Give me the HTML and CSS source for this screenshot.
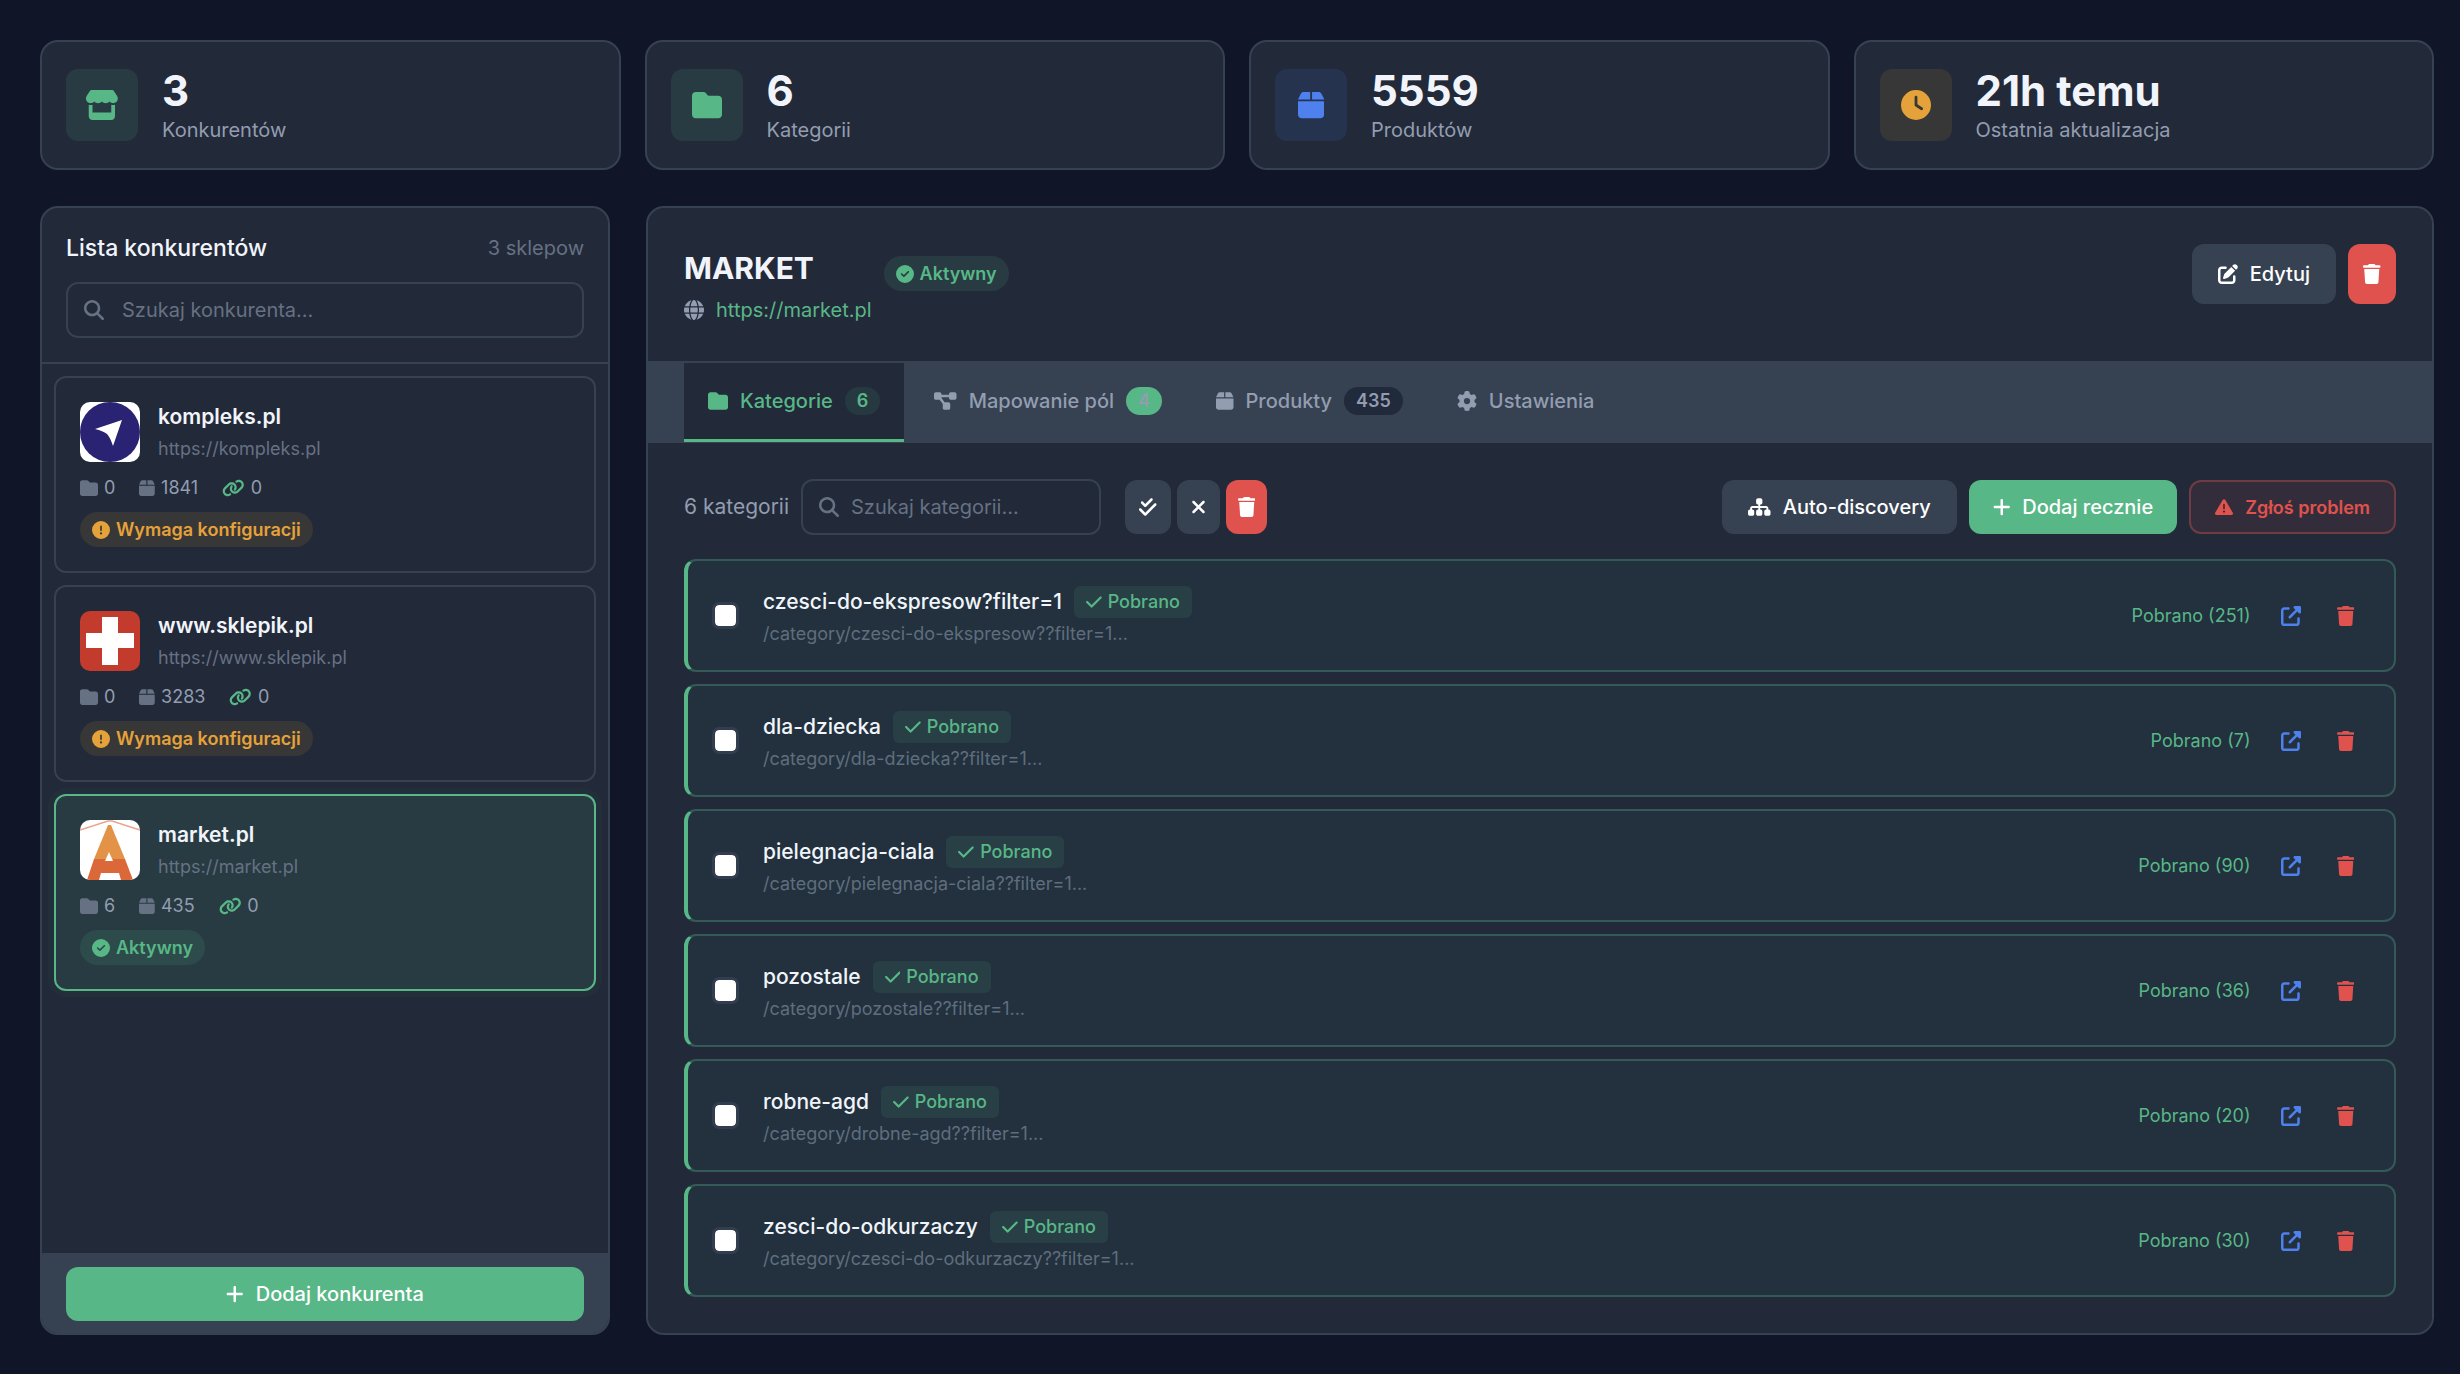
FILE: index.html
```
<!DOCTYPE html>
<html lang="pl">
<head>
  <meta charset="UTF-8">
  <meta name="viewport" content="width=device-width, initial-scale=1.0">
  <title>Konkurenci</title>
  <link rel="stylesheet" href="styles.css">
</head>
<body>
  <!-- Ikony -->
  <svg class="sprite" aria-hidden="true">
    <defs>
      <path id="i-store" d="M547.6 103.8L490.3 13.1C485.2 5 476.1 0 466.4 0H109.6C99.9 0 90.8 5 85.7 13.1L28.3 103.8c-29.6 46.8-3.4 111.9 51.9 119.4c4 .5 8.1 .8 12.1 .8c26.1 0 49.3-11.4 65.2-29c15.9 17.6 39.1 29 65.2 29c26.1 0 49.3-11.4 65.2-29c15.9 17.6 39.1 29 65.2 29c26.2 0 49.3-11.4 65.2-29c16 17.6 39.1 29 65.2 29c4.1 0 8.1-.3 12.1-.8c55.5-7.4 81.8-72.5 52.1-119.4zM499.7 254.9l-.1 0c-5.3 .7-10.7 1.1-16.2 1.1c-12.4 0-24.3-1.9-35.4-5.3V384H128V250.6c-11.2 3.5-23.2 5.4-35.6 5.4c-5.5 0-11-.4-16.3-1.1l-.1 0c-4.1-.6-8.1-1.3-12-2.3V384v64c0 35.3 28.7 64 64 64H448c35.3 0 64-28.7 64-64V384 252.6c-4 1-8 1.8-12.3 2.3z"/>
      <path id="i-folder" d="M64 480H448c35.3 0 64-28.7 64-64V160c0-35.3-28.7-64-64-64H288c-10.1 0-19.6-4.7-25.6-12.8L243.2 57.6C231.1 41.5 212.1 32 192 32H64C28.7 32 0 60.7 0 96V416c0 35.3 28.7 64 64 64z"/>
      <path id="i-box" d="M50.7 58.5L0 160H208V32H93.7C75.5 32 58.9 42.3 50.7 58.5zM240 160H448L397.3 58.5C389.1 42.3 372.5 32 354.3 32H240V160zm208 32H0V416c0 35.3 28.7 64 64 64H384c35.3 0 64-28.7 64-64V192z"/>
      <path id="i-clock" d="M256 0a256 256 0 1 1 0 512A256 256 0 1 1 256 0zM232 120V256c0 8 4 15.5 10.7 20l96 64c11 7.4 25.9 4.4 33.3-6.7s4.4-25.9-6.7-33.3L280 243.2V120c0-13.3-10.7-24-24-24s-24 10.7-24 24z"/>
      <path id="i-search" d="M416 208c0 45.9-14.9 88.3-40 122.7L502.6 457.4c12.5 12.5 12.5 32.8 0 45.3s-32.8 12.5-45.3 0L330.7 376c-34.4 25.2-76.8 40-122.7 40C93.1 416 0 322.9 0 208S93.1 0 208 0S416 93.1 416 208zM208 352a144 144 0 1 0 0-288 144 144 0 1 0 0 288z"/>
      <path id="i-globe" d="M352 256c0 22.2-1.2 43.6-3.3 64H163.3c-2.2-20.4-3.3-41.8-3.3-64s1.2-43.6 3.3-64H348.7c2.2 20.4 3.3 41.8 3.3 64zm28.8-64H503.9c5.3 20.5 8.1 41.9 8.1 64s-2.8 43.5-8.1 64H380.8c2.1-20.6 3.2-42 3.2-64s-1.1-43.4-3.2-64zm112.6-32H376.7c-10-63.9-29.8-117.4-55.3-151.6c78.3 20.7 142 77.5 171.9 151.6zm-149.1 0H167.7c6.1-36.4 15.5-68.6 27-94.7c10.5-23.6 22.2-40.7 33.5-51.5C239.4 3.2 248.7 0 256 0s16.6 3.2 27.8 13.8c11.3 10.8 23 27.9 33.5 51.5c11.6 26 20.9 58.2 27 94.7zm-209 0H18.6C48.6 85.9 112.2 29.1 190.6 8.4C165.1 42.6 145.3 96.1 135.3 160zM8.1 192H131.2c-2.1 20.6-3.2 42-3.2 64s1.1 43.4 3.2 64H8.1C2.8 299.5 0 278.1 0 256s2.8-43.5 8.1-64zM194.7 446.6c-11.6-26-20.9-58.2-27-94.6H344.3c-6.1 36.4-15.5 68.6-27 94.6c-10.5 23.6-22.2 40.7-33.5 51.5C272.6 508.8 263.3 512 256 512s-16.6-3.2-27.8-13.8c-11.3-10.8-23-27.9-33.5-51.5zM135.3 352c10 63.9 29.8 117.4 55.3 151.6C112.2 482.9 48.6 426.1 18.6 352H135.3zm358.1 0c-30 74.1-93.6 130.9-171.9 151.6c25.5-34.2 45.2-87.7 55.3-151.6H493.4z"/>
      <path id="i-ok" d="M256 512A256 256 0 1 0 256 0a256 256 0 1 0 0 512zM369 209L241 337c-9.4 9.4-24.6 9.4-33.9 0l-64-64c-9.4-9.4-9.4-24.6 0-33.9s24.6-9.4 33.9 0l47 47L335 175c9.4-9.4 24.6-9.4 33.9 0s9.4 24.6 0 33.9z"/>
      <path id="i-alert" d="M256 512A256 256 0 1 0 256 0a256 256 0 1 0 0 512zm0-384c13.3 0 24 10.7 24 24V264c0 13.3-10.7 24-24 24s-24-10.7-24-24V152c0-13.3 10.7-24 24-24zM224 352a32 32 0 1 1 64 0 32 32 0 1 1 -64 0z"/>
      <path id="i-trash" d="M135.2 17.7L128 32H32C14.3 32 0 46.3 0 64S14.3 96 32 96H416c17.7 0 32-14.3 32-32s-14.3-32-32-32H320l-7.2-14.3C307.4 6.8 296.3 0 284.2 0H163.8c-12.1 0-23.2 6.8-28.6 17.7zM416 128H32L53.2 467c1.6 25.3 22.6 45 47.9 45H346.9c25.3 0 46.3-19.7 47.9-45L416 128z"/>
      <path id="i-edit" d="M471.6 21.7c-21.9-21.9-57.3-21.9-79.2 0L362.3 51.7l97.9 97.9 30.1-30.1c21.9-21.9 21.9-57.3 0-79.2L471.6 21.7zm-299.2 220c-6.1 6.1-10.8 13.6-13.5 21.9l-29.6 88.8c-2.9 8.6-.6 18.1 5.8 24.6s15.9 8.7 24.6 5.8l88.8-29.6c8.2-2.7 15.7-7.4 21.9-13.5L437.7 172.3 339.7 74.3 172.4 241.7zM96 64C43 64 0 107 0 160V416c0 53 43 96 96 96H352c53 0 96-43 96-96V320c0-17.7-14.3-32-32-32s-32 14.3-32 32v96c0 17.7-14.3 32-32 32H96c-17.7 0-32-14.3-32-32V160c0-17.7 14.3-32 32-32h96c17.7 0 32-14.3 32-32s-14.3-32-32-32H96z"/>
      <path id="i-map" d="M0 80C0 53.5 21.5 32 48 32h96c26.5 0 48 21.5 48 48V96H384V80c0-26.5 21.5-48 48-48h96c26.5 0 48 21.5 48 48v96c0 26.5-21.5 48-48 48H432c-26.5 0-48-21.5-48-48V160H192v16c0 1.7-.1 3.4-.3 5L272 288h96c26.5 0 48 21.5 48 48v96c0 26.5-21.5 48-48 48H272c-26.5 0-48-21.5-48-48V336c0-1.7 .1-3.4 .3-5L144 224H48c-26.5 0-48-21.5-48-48V80z"/>
      <path id="i-gear" d="M495.9 166.6c3.2 8.7 .5 18.4-6.4 24.6l-43.3 39.4c1.1 8.3 1.7 16.8 1.7 25.4s-.6 17.1-1.7 25.4l43.3 39.4c6.9 6.2 9.6 15.9 6.4 24.6c-4.4 11.9-9.7 23.3-15.8 34.3l-4.7 8.1c-6.6 11-14 21.4-22.1 31.2c-5.9 7.2-15.7 9.6-24.5 6.8l-55.7-17.7c-13.4 10.3-28.2 18.9-44 25.4l-12.5 57.1c-2 9.1-9 16.3-18.2 17.8c-13.8 2.3-28 3.5-42.5 3.5s-28.7-1.2-42.5-3.5c-9.2-1.5-16.2-8.7-18.2-17.8l-12.5-57.1c-15.8-6.5-30.6-15.1-44-25.4L83.1 425.9c-8.8 2.8-18.6 .3-24.5-6.8c-8.1-9.8-15.5-20.2-22.1-31.2l-4.7-8.1c-6.1-11-11.4-22.4-15.8-34.3c-3.2-8.7-.5-18.4 6.4-24.6l43.3-39.4C64.6 273.1 64 264.6 64 256s.6-17.1 1.7-25.4L22.4 191.2c-6.9-6.2-9.6-15.9-6.4-24.6c4.4-11.9 9.7-23.3 15.8-34.3l4.7-8.1c6.6-11 14-21.4 22.1-31.2c5.9-7.2 15.7-9.6 24.5-6.8l55.7 17.7c13.4-10.3 28.2-18.9 44-25.4l12.5-57.1c2-9.1 9-16.3 18.2-17.8C227.3 1.2 241.5 0 256 0s28.7 1.2 42.5 3.5c9.2 1.5 16.2 8.7 18.2 17.8l12.5 57.1c15.8 6.5 30.6 15.1 44 25.4l55.7-17.7c8.8-2.8 18.6-.3 24.5 6.8c8.1 9.8 15.5 20.2 22.1 31.2l4.7 8.1c6.1 11 11.4 22.4 15.8 34.3zM256 336a80 80 0 1 0 0-160 80 80 0 1 0 0 160z"/>
      <path id="i-link" d="M579.8 267.7c56.5-56.5 56.5-148 0-204.5c-50-50-128.8-56.5-186.3-15.4l-1.6 1.1c-14.4 10.3-17.7 30.3-7.4 44.6s30.3 17.7 44.6 7.4l1.6-1.1c32.1-22.9 76-19.3 103.8 8.6c31.5 31.5 31.5 82.5 0 114L422.3 334.8c-31.5 31.5-82.5 31.5-114 0c-27.9-27.9-31.5-71.8-8.6-103.8l1.1-1.6c10.3-14.4 6.9-34.4-7.4-44.6s-34.4-6.9-44.6 7.4l-1.1 1.6C206.5 251.2 213 330 263 380c56.5 56.5 148 56.5 204.5 0L579.8 267.7zM60.2 244.3c-56.5 56.5-56.5 148 0 204.5c50 50 128.8 56.5 186.3 15.4l1.6-1.1c14.4-10.3 17.7-30.3 7.4-44.6s-30.3-17.7-44.6-7.4l-1.6 1.1c-32.1 22.9-76 19.3-103.8-8.6C74 372 74 321 105.5 289.5L217.7 177.2c31.5-31.5 82.5-31.5 114 0c27.9 27.9 31.5 71.8 8.6 103.9l-1.1 1.6c-10.3 14.4-6.9 34.4 7.4 44.6s34.4 6.9 44.6-7.4l1.1-1.6C433.5 260.8 427 182 377 132c-56.5-56.5-148-56.5-204.5 0L60.2 244.3z"/>
      <path id="i-plus" d="M256 80c0-17.7-14.3-32-32-32s-32 14.3-32 32V224H48c-17.7 0-32 14.3-32 32s14.3 32 32 32H192V432c0 17.7 14.3 32 32 32s32-14.3 32-32V288H400c17.7 0 32-14.3 32-32s-14.3-32-32-32H256V80z"/>
      <path id="i-close" d="M342.6 150.6c12.5-12.5 12.5-32.8 0-45.3s-32.8-12.5-45.3 0L192 210.7 86.6 105.4c-12.5-12.5-32.8-12.5-45.3 0s-12.5 32.8 0 45.3L146.7 256 41.4 361.4c-12.5 12.5-12.5 32.8 0 45.3s32.8 12.5 45.3 0L192 301.3 297.4 406.6c12.5 12.5 32.8 12.5 45.3 0s12.5-32.8 0-45.3L237.3 256 342.6 150.6z"/>
      <path id="i-check" d="M438.6 105.4c12.5 12.5 12.5 32.8 0 45.3l-256 256c-12.5 12.5-32.8 12.5-45.3 0l-128-128c-12.5-12.5-12.5-32.8 0-45.3s32.8-12.5 45.3 0L160 338.7 393.4 105.4c12.5-12.5 32.8-12.5 45.3 0z"/>
      <path id="i-check-all" d="M342.6 86.6c12.5-12.5 12.5-32.8 0-45.3s-32.8-12.5-45.3 0L160 178.7l-57.4-57.4c-12.5-12.5-32.8-12.5-45.3 0s-12.5 32.8 0 45.3l80 80c12.5 12.5 32.8 12.5 45.3 0l160-160zm96 128c12.5-12.5 12.5-32.8 0-45.3s-32.8-12.5-45.3 0L160 402.7 54.6 297.4c-12.5-12.5-32.8-12.5-45.3 0s-12.5 32.8 0 45.3l128 128c12.5 12.5 32.8 12.5 45.3 0l256-256z"/>
      <path id="i-sitemap" d="M208 80c0-26.5 21.5-48 48-48h64c26.5 0 48 21.5 48 48v64c0 26.5-21.5 48-48 48h-8v40H464c30.9 0 56 25.1 56 56v32h8c26.5 0 48 21.5 48 48v64c0 26.5-21.5 48-48 48H464c-26.5 0-48-21.5-48-48V368c0-26.5 21.5-48 48-48h8V288c0-4.4-3.6-8-8-8H312v40h8c26.5 0 48 21.5 48 48v64c0 26.5-21.5 48-48 48H256c-26.5 0-48-21.5-48-48V368c0-26.5 21.5-48 48-48h8V280H112c-4.4 0-8 3.6-8 8v32h8c26.5 0 48 21.5 48 48v64c0 26.5-21.5 48-48 48H48c-26.5 0-48-21.5-48-48V368c0-26.5 21.5-48 48-48h8V288c0-30.9 25.1-56 56-56H264V192h-8c-26.5 0-48-21.5-48-48V80z"/>
      <path id="i-warning" d="M256 32c14.2 0 27.3 7.5 34.5 19.8l216 368c7.3 12.4 7.3 27.7 .2 40.1S486.3 480 472 480H40c-14.3 0-27.6-7.7-34.7-20.1s-7-27.8 .2-40.1l216-368C228.7 39.5 241.8 32 256 32zm0 128c-13.3 0-24 10.7-24 24V296c0 13.3 10.7 24 24 24s24-10.7 24-24V184c0-13.3-10.7-24-24-24zm32 224a32 32 0 1 0 -64 0 32 32 0 1 0 64 0z"/>
      <path id="i-open" d="M352 0c-12.9 0-24.6 7.8-29.6 19.8s-2.2 25.7 6.9 34.9L370.7 96 201.4 265.4c-12.5 12.5-12.5 32.8 0 45.3s32.8 12.5 45.3 0L416 141.3l41.4 41.4c9.2 9.2 22.9 11.9 34.9 6.9s19.8-16.6 19.8-29.6V32c0-17.7-14.3-32-32-32H352zM80 32C35.8 32 0 67.8 0 112V432c0 44.2 35.8 80 80 80H400c44.2 0 80-35.8 80-80V320c0-17.7-14.3-32-32-32s-32 14.3-32 32V432c0 8.8-7.2 16-16 16H80c-8.8 0-16-7.2-16-16V112c0-8.8 7.2-16 16-16H192c17.7 0 32-14.3 32-32s-14.3-32-32-32H80z"/>
    </defs>
  </svg>

  <div class="stats">
    <div class="stat">
      <div class="stat-icon green"><svg class="icon-lg" viewBox="0 0 576 512"><use href="#i-store"/></svg></div>
      <div>
        <div class="stat-value">3</div>
        <div class="stat-label">Konkurentów</div>
      </div>
    </div>
    <div class="stat">
      <div class="stat-icon green"><svg class="icon-lg" viewBox="0 0 512 512"><use href="#i-folder"/></svg></div>
      <div>
        <div class="stat-value">6</div>
        <div class="stat-label">Kategorii</div>
      </div>
    </div>
    <div class="stat">
      <div class="stat-icon blue"><svg class="icon-lg" viewBox="0 0 448 512"><use href="#i-box"/></svg></div>
      <div>
        <div class="stat-value">5559</div>
        <div class="stat-label">Produktów</div>
      </div>
    </div>
    <div class="stat">
      <div class="stat-icon orange"><svg class="icon-lg" viewBox="0 0 512 512"><use href="#i-clock"/></svg></div>
      <div>
        <div class="stat-value">21h temu</div>
        <div class="stat-label">Ostatnia aktualizacja</div>
      </div>
    </div>
  </div>

  <div class="layout">
    <!-- Lista konkurentów -->
    <aside class="panel sidebar">
      <div class="sidebar-header">
        <div class="sidebar-title">
          <h2>Lista konkurentów</h2>
          <span>3 sklepow</span>
        </div>
        <div class="search">
          <svg class="icon" viewBox="0 0 512 512"><use href="#i-search"/></svg>
          <input type="text" placeholder="Szukaj konkurenta..." aria-label="Szukaj konkurenta">
        </div>
      </div>

      <div class="shop-list">
        <div class="shop">
          <div class="shop-top">
            <svg class="shop-logo" viewBox="0 0 60 60">
              <rect width="60" height="60" fill="#fff"/>
              <circle cx="30" cy="30" r="30" fill="#2a2273"/>
              <path d="M15 27L42 18L33 44Q30 35 27 32Q23 29 15 27Z" fill="#fff"/>
            </svg>
            <div>
              <div class="shop-name">kompleks.pl</div>
              <div class="shop-url">https://kompleks.pl</div>
            </div>
          </div>
          <div class="shop-stats">
            <span><svg class="icon-sm" viewBox="0 0 512 512"><use href="#i-folder"/></svg>0</span>
            <span><svg class="icon-sm" viewBox="0 0 448 512"><use href="#i-box"/></svg>1841</span>
            <span><svg class="icon-sm linked" viewBox="0 0 640 512"><use href="#i-link"/></svg>0</span>
          </div>
          <div class="status warn"><svg class="icon-sm" viewBox="0 0 512 512"><use href="#i-alert"/></svg>Wymaga konfiguracji</div>
        </div>

        <div class="shop">
          <div class="shop-top">
            <svg class="shop-logo" viewBox="0 0 60 60">
              <rect width="60" height="60" fill="#c23b2c"/>
              <path d="M22 6H38V22H54V37H38V54H22V37H6V22H22Z" fill="#fff"/>
            </svg>
            <div>
              <div class="shop-name">www.sklepik.pl</div>
              <div class="shop-url">https://www.sklepik.pl</div>
            </div>
          </div>
          <div class="shop-stats">
            <span><svg class="icon-sm" viewBox="0 0 512 512"><use href="#i-folder"/></svg>0</span>
            <span><svg class="icon-sm" viewBox="0 0 448 512"><use href="#i-box"/></svg>3283</span>
            <span><svg class="icon-sm linked" viewBox="0 0 640 512"><use href="#i-link"/></svg>0</span>
          </div>
          <div class="status warn"><svg class="icon-sm" viewBox="0 0 512 512"><use href="#i-alert"/></svg>Wymaga konfiguracji</div>
        </div>

        <div class="shop active">
          <div class="shop-top">
            <svg class="shop-logo" viewBox="0 0 60 60">
              <rect width="60" height="60" fill="#fff"/>
              <path d="M0 10L28 1H32L60 10" fill="none" stroke="#e9a48e" stroke-width="1.5"/>
              <path d="M28 5H31L45 39H14Z" fill="#e39347"/>
              <path d="M14 39H45L53 60H41L39 53H21L19 60H7Z" fill="#da6839"/>
              <path d="M29 32L33 41H25Z" fill="#fff"/>
            </svg>
            <div>
              <div class="shop-name">market.pl</div>
              <div class="shop-url">https://market.pl</div>
            </div>
          </div>
          <div class="shop-stats">
            <span><svg class="icon-sm" viewBox="0 0 512 512"><use href="#i-folder"/></svg>6</span>
            <span><svg class="icon-sm" viewBox="0 0 448 512"><use href="#i-box"/></svg>435</span>
            <span><svg class="icon-sm linked" viewBox="0 0 640 512"><use href="#i-link"/></svg>0</span>
          </div>
          <div class="status ok"><svg class="icon-sm" viewBox="0 0 512 512"><use href="#i-ok"/></svg>Aktywny</div>
        </div>
      </div>

      <div class="sidebar-footer">
        <button class="btn btn-green"><svg class="icon" viewBox="0 0 448 512"><use href="#i-plus"/></svg>Dodaj konkurenta</button>
      </div>
    </aside>

    <!-- Szczegóły sklepu -->
    <main class="panel details">
      <div class="details-header">
        <div>
          <h1>MARKET</h1>
          <div class="details-url">
            <svg class="icon" viewBox="0 0 512 512"><use href="#i-globe"/></svg>
            <a href="#">https://market.pl</a>
          </div>
        </div>
        <div class="status ok"><svg class="icon-sm" viewBox="0 0 512 512"><use href="#i-ok"/></svg>Aktywny</div>
        <div class="details-actions">
          <button class="btn btn-gray btn-tall"><svg class="icon" viewBox="0 0 512 512"><use href="#i-edit"/></svg>Edytuj</button>
          <button class="btn btn-red btn-tall btn-delete" aria-label="Usuń sklep"><svg class="icon" viewBox="0 0 448 512"><use href="#i-trash"/></svg></button>
        </div>
      </div>

      <div class="tabs">
        <button class="tab active"><svg class="icon" viewBox="0 0 512 512"><use href="#i-folder"/></svg>Kategorie<span class="count">6</span></button>
        <button class="tab"><svg class="icon" viewBox="0 0 576 512"><use href="#i-map"/></svg>Mapowanie pól<span class="count full">4</span></button>
        <button class="tab"><svg class="icon" viewBox="0 0 448 512"><use href="#i-box"/></svg>Produkty<span class="count">435</span></button>
        <button class="tab"><svg class="icon" viewBox="0 0 512 512"><use href="#i-gear"/></svg>Ustawienia</button>
      </div>

      <div class="content">
        <div class="toolbar">
          <span class="toolbar-count">6 kategorii</span>
          <div class="search search-category">
            <svg class="icon" viewBox="0 0 512 512"><use href="#i-search"/></svg>
            <input type="text" placeholder="Szukaj kategorii..." aria-label="Szukaj kategorii">
          </div>
          <div class="bulk">
            <button class="btn btn-gray btn-icon" aria-label="Zaznacz wszystkie"><svg class="icon" viewBox="0 0 448 512"><use href="#i-check-all"/></svg></button>
            <button class="btn btn-gray btn-icon" aria-label="Odznacz"><svg class="icon" viewBox="0 0 384 512"><use href="#i-close"/></svg></button>
            <button class="btn btn-red btn-icon" aria-label="Usuń zaznaczone"><svg class="icon" viewBox="0 0 448 512"><use href="#i-trash"/></svg></button>
          </div>
          <div class="toolbar-actions">
            <button class="btn btn-gray"><svg class="icon" viewBox="0 0 576 512"><use href="#i-sitemap"/></svg>Auto-discovery</button>
            <button class="btn btn-green"><svg class="icon" viewBox="0 0 448 512"><use href="#i-plus"/></svg>Dodaj recznie</button>
            <button class="btn btn-report"><svg class="icon-sm" viewBox="0 0 512 512"><use href="#i-warning"/></svg>Zgłoś problem</button>
          </div>
        </div>

        <div class="categories">
          <div class="category">
            <input type="checkbox" aria-label="czesci-do-ekspresow?filter=1">
            <div class="category-info">
              <div class="category-name">czesci-do-ekspresow?filter=1<span class="tag"><svg class="icon-sm" viewBox="0 0 448 512"><use href="#i-check"/></svg>Pobrano</span></div>
              <div class="category-path">/category/czesci-do-ekspresow??filter=1...</div>
            </div>
            <span class="category-count">Pobrano (251)</span>
            <a class="action open" href="#" aria-label="Otwórz"><svg class="icon" viewBox="0 0 512 512"><use href="#i-open"/></svg></a>
            <button class="action remove" aria-label="Usuń"><svg class="icon" viewBox="0 0 448 512"><use href="#i-trash"/></svg></button>
          </div>
          <div class="category">
            <input type="checkbox" aria-label="dla-dziecka">
            <div class="category-info">
              <div class="category-name">dla-dziecka<span class="tag"><svg class="icon-sm" viewBox="0 0 448 512"><use href="#i-check"/></svg>Pobrano</span></div>
              <div class="category-path">/category/dla-dziecka??filter=1...</div>
            </div>
            <span class="category-count">Pobrano (7)</span>
            <a class="action open" href="#" aria-label="Otwórz"><svg class="icon" viewBox="0 0 512 512"><use href="#i-open"/></svg></a>
            <button class="action remove" aria-label="Usuń"><svg class="icon" viewBox="0 0 448 512"><use href="#i-trash"/></svg></button>
          </div>
          <div class="category">
            <input type="checkbox" aria-label="pielegnacja-ciala">
            <div class="category-info">
              <div class="category-name">pielegnacja-ciala<span class="tag"><svg class="icon-sm" viewBox="0 0 448 512"><use href="#i-check"/></svg>Pobrano</span></div>
              <div class="category-path">/category/pielegnacja-ciala??filter=1...</div>
            </div>
            <span class="category-count">Pobrano (90)</span>
            <a class="action open" href="#" aria-label="Otwórz"><svg class="icon" viewBox="0 0 512 512"><use href="#i-open"/></svg></a>
            <button class="action remove" aria-label="Usuń"><svg class="icon" viewBox="0 0 448 512"><use href="#i-trash"/></svg></button>
          </div>
          <div class="category">
            <input type="checkbox" aria-label="pozostale">
            <div class="category-info">
              <div class="category-name">pozostale<span class="tag"><svg class="icon-sm" viewBox="0 0 448 512"><use href="#i-check"/></svg>Pobrano</span></div>
              <div class="category-path">/category/pozostale??filter=1...</div>
            </div>
            <span class="category-count">Pobrano (36)</span>
            <a class="action open" href="#" aria-label="Otwórz"><svg class="icon" viewBox="0 0 512 512"><use href="#i-open"/></svg></a>
            <button class="action remove" aria-label="Usuń"><svg class="icon" viewBox="0 0 448 512"><use href="#i-trash"/></svg></button>
          </div>
          <div class="category">
            <input type="checkbox" aria-label="robne-agd">
            <div class="category-info">
              <div class="category-name">robne-agd<span class="tag"><svg class="icon-sm" viewBox="0 0 448 512"><use href="#i-check"/></svg>Pobrano</span></div>
              <div class="category-path">/category/drobne-agd??filter=1...</div>
            </div>
            <span class="category-count">Pobrano (20)</span>
            <a class="action open" href="#" aria-label="Otwórz"><svg class="icon" viewBox="0 0 512 512"><use href="#i-open"/></svg></a>
            <button class="action remove" aria-label="Usuń"><svg class="icon" viewBox="0 0 448 512"><use href="#i-trash"/></svg></button>
          </div>
          <div class="category">
            <input type="checkbox" aria-label="zesci-do-odkurzaczy">
            <div class="category-info">
              <div class="category-name">zesci-do-odkurzaczy<span class="tag"><svg class="icon-sm" viewBox="0 0 448 512"><use href="#i-check"/></svg>Pobrano</span></div>
              <div class="category-path">/category/czesci-do-odkurzaczy??filter=1...</div>
            </div>
            <span class="category-count">Pobrano (30)</span>
            <a class="action open" href="#" aria-label="Otwórz"><svg class="icon" viewBox="0 0 512 512"><use href="#i-open"/></svg></a>
            <button class="action remove" aria-label="Usuń"><svg class="icon" viewBox="0 0 448 512"><use href="#i-trash"/></svg></button>
          </div>
        </div>
      </div>
    </main>
  </div>
</body>
</html>
```
FILE: styles.css
```
:root {
  --bg: #101628;
  --card: #222939;
  --line: #364152;
  --text: #f1f5fb;
  --text-soft: #929db0;
  --text-dim: #667183;
  --green: #58b787;
  --red: #e0524d;
  --blue: #4e80ee;
  --orange: #e6a23a;
}
* {
  box-sizing: border-box;
}
body {
  margin: 0;
  padding: 40px 26px 39px 40px;
  min-height: 100vh;
  display: flex;
  flex-direction: column;
  gap: 36px;
  background-color: var(--bg);
  color: var(--text);
  font-family: Inter, sans-serif;
  font-size: 20px;
  line-height: 30px;
}
h1, h2 {
  margin: 0;
}
button, input {
  font-family: inherit;
}
svg {
  flex-shrink: 0;
  fill: currentColor;
}
.sprite {
  display: none;
}
.icon {
  height: 20px;
}
.icon-sm {
  height: 18px;
}
.icon-lg {
  height: 30px;
}

/* Statystyki */
.stats {
  display: grid;
  grid-template-columns: repeat(4, 1fr);
  gap: 24px;
}
.stat {
  display: flex;
  align-items: center;
  gap: 24px;
  height: 130px;
  padding: 0 24px;
  background-color: var(--card);
  border: 2px solid var(--line);
  border-radius: 18px;
}
.stat-icon {
  width: 72px;
  height: 72px;
  display: flex;
  align-items: center;
  justify-content: center;
  border-radius: 12px;
}
.stat-icon.green {
  background-color: #283b42;
  color: var(--green);
}
.stat-icon.blue {
  background-color: #26334f;
  color: var(--blue);
}
.stat-icon.orange {
  background-color: #383737;
  color: var(--orange);
}
.stat-value {
  font-size: 42px;
  line-height: 50px;
  font-weight: 700;
}
.stat-label {
  line-height: 28px;
  color: var(--text-soft);
}

/* Układ */
.layout {
  flex: 1;
  display: grid;
  grid-template-columns: 570px 1fr;
  gap: 36px;
}
.panel {
  display: flex;
  flex-direction: column;
  background-color: var(--card);
  border: 2px solid var(--line);
  border-radius: 18px;
  overflow: hidden;
}
.sidebar-header {
  padding: 24px;
  border-bottom: 2px solid var(--line);
}
.sidebar-title {
  display: flex;
  align-items: center;
  justify-content: space-between;
  height: 32px;
  margin-bottom: 18px;
  color: var(--text-dim);
}
.sidebar-title h2 {
  color: var(--text);
  font-size: 23px;
  font-weight: 500;
}
.search {
  display: flex;
  align-items: center;
  gap: 18px;
  height: 56px;
  padding: 0 16px;
  border: 2px solid var(--line);
  border-radius: 12px;
  color: var(--text-dim);
}
.search input {
  flex: 1;
  min-width: 0;
  padding: 0;
  border: none;
  outline: none;
  background: none;
  color: var(--text);
  font-size: 20px;
}
.search input::placeholder {
  color: var(--text-dim);
}
.shop-list {
  flex: 1;
  display: flex;
  flex-direction: column;
  gap: 12px;
  padding: 12px;
}
.shop {
  padding: 24px;
  border: 2px solid var(--line);
  border-radius: 12px;
}
.shop.active {
  background-color: #283b42;
  border-color: var(--green);
  box-shadow: 0 0 0 6px rgba(88, 183, 135, 0.04);
}
.shop-top {
  display: flex;
  gap: 18px;
  height: 60px;
}
.shop-logo {
  width: 60px;
  height: 60px;
  border-radius: 10px;
}
.shop-name {
  font-size: 21px;
  line-height: 30px;
  font-weight: 600;
}
.shop-url {
  font-size: 18px;
  line-height: 34px;
  color: var(--text-dim);
}
.shop-stats {
  display: flex;
  gap: 24px;
  margin: 12px 0 10px;
  font-size: 18px;
  line-height: 28px;
  color: var(--text-soft);
}
.shop-stats span {
  display: flex;
  align-items: center;
  gap: 6px;
}
.shop-stats svg {
  color: var(--text-dim);
}
.shop-stats .linked {
  color: var(--green);
}
.status {
  display: flex;
  align-items: center;
  gap: 6px;
  width: fit-content;
  height: 35px;
  padding: 0 12px;
  border-radius: 18px;
  font-size: 18px;
  font-weight: 600;
}
.status.ok {
  background-color: rgba(88, 183, 135, 0.13);
  color: var(--green);
}
.status.warn {
  background-color: #383737;
  color: var(--orange);
}
.sidebar-footer {
  padding: 14px 24px 12px;
  background-color: var(--line);
}
.sidebar-footer .btn {
  width: 100%;
}

/* Przyciski */
.btn {
  display: flex;
  align-items: center;
  justify-content: center;
  gap: 12px;
  height: 54px;
  padding: 0 24px;
  border: none;
  border-radius: 12px;
  color: #fff;
  font-size: 20px;
  font-weight: 500;
  cursor: pointer;
}
.btn-tall {
  height: 60px;
}
.btn-green {
  background-color: var(--green);
}
.btn-gray {
  background-color: var(--line);
  border: 2px solid var(--line);
}
.btn-red {
  background-color: var(--red);
}
.btn-icon {
  padding: 0 12px;
}
.btn-delete {
  width: 48px;
  padding: 0;
}
.btn-report {
  background-color: #332d3b;
  border: 2px solid #703c44;
  color: var(--red);
  font-size: 18px;
  font-weight: 600;
}

/* Nagłówek sklepu */
.details-header {
  display: flex;
  align-items: flex-start;
  gap: 12px;
  padding: 36px;
  border-bottom: 2px solid var(--line);
}
.details-header h1 {
  margin-bottom: 3px;
  font-size: 30px;
  line-height: 48px;
  font-weight: 700;
}
.details-header .status {
  margin-top: 12px;
}
.details-url {
  display: flex;
  align-items: center;
  gap: 12px;
  color: var(--text-soft);
}
.details-url a {
  color: var(--green);
  text-decoration: none;
}
.details-actions {
  display: flex;
  gap: 12px;
  margin-left: auto;
}
.tabs {
  display: flex;
  gap: 6px;
  padding: 0 36px;
  background-color: var(--line);
  border-bottom: 1px solid var(--line);
}
.tab {
  display: flex;
  align-items: center;
  gap: 12px;
  padding: 24px;
  border: none;
  border-bottom: 3px solid transparent;
  background: none;
  color: var(--text-soft);
  font-size: 20px;
  line-height: 28px;
  font-weight: 500;
  cursor: pointer;
}
.tab.active {
  background-color: var(--card);
  border-bottom-color: var(--green);
  color: var(--green);
}
.count {
  padding: 0 12px;
  border-radius: 14px;
  background-color: #202a3b;
  font-size: 18px;
  font-weight: 600;
}
.tab.active .count {
  background-color: #263941;
}
.tab .count.full {
  background-color: var(--green);
}

/* Kategorie */
.content {
  padding: 36px;
}
.toolbar {
  display: flex;
  align-items: center;
  gap: 12px;
  margin-bottom: 24px;
}
.toolbar-count {
  font-size: 21px;
  color: var(--text-soft);
}
.search-category {
  width: 300px;
  gap: 12px;
}
.bulk {
  display: flex;
  gap: 6px;
  margin-left: 12px;
}
.toolbar-actions {
  display: flex;
  gap: 12px;
  margin-left: auto;
}
.categories {
  display: flex;
  flex-direction: column;
  gap: 12px;
}
.category {
  display: flex;
  align-items: center;
  height: 113px;
  padding: 0 24px;
  background-color: #22313d;
  border: 2px solid #345a57;
  border-left: 4px solid var(--green);
  border-radius: 12px;
}
.category input {
  appearance: none;
  width: 27px;
  height: 27px;
  margin: 0 24px 0 0;
  border: 3px solid #323d50;
  border-radius: 7px;
  background-color: #fff;
  background-clip: padding-box;
}
.category-info {
  flex: 1;
  padding-top: 2px;
}
.category-name {
  display: flex;
  align-items: center;
  gap: 12px;
  height: 32px;
  font-size: 21px;
  font-weight: 500;
}
.category-path {
  margin-top: 2px;
  font-size: 18px;
  line-height: 27px;
  color: #5f6d7d;
}
.tag {
  display: flex;
  align-items: center;
  gap: 6px;
  height: 32px;
  padding: 0 12px;
  border-radius: 6px;
  background-color: #283f45;
  color: var(--green);
  font-size: 18px;
}
.category-count {
  margin-right: 14px;
  font-size: 18px;
  color: var(--green);
}
.action {
  display: flex;
  padding: 16px;
  border: none;
  background: none;
  cursor: pointer;
}
.action.open {
  margin-right: 4px;
  color: var(--blue);
}
.action.remove {
  color: var(--red);
}
```
